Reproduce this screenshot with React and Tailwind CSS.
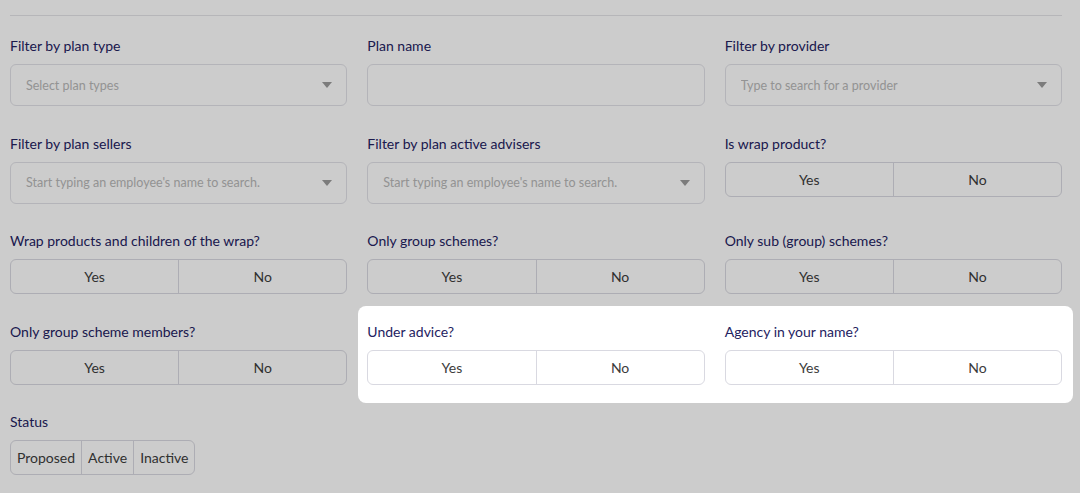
import React from "react";

const labelCls = "block text-[14px] leading-[20px] text-[#24225f] mb-2";

function Caret() {
  return (
    <svg width="10" height="6" viewBox="0 0 10 6" className="shrink-0">
      <path d="M0 0 L10 0 L5 6 Z" fill="#9c9c9c" />
    </svg>
  );
}

function SelectField({ label, placeholder, caret = true }) {
  return (
    <div className="flex flex-col">
      <span className={labelCls}>{label}</span>
      <div className="h-[42px] rounded-md border border-[#e2e2e8] bg-white flex items-center pl-[15px] pr-[14px]">
        <span className="flex-1 text-[12.5px] leading-[18px] pt-px text-[#b8b8b8] truncate">{placeholder}</span>
        {caret && <Caret />}
      </div>
    </div>
  );
}

function YesNo({ label }) {
  return (
    <div className="flex flex-col">
      <span className={labelCls}>{label}</span>
      <div className="h-[35px] rounded-md border border-[#d9d9e1] bg-white flex text-[14px] text-[#3c3c3c]">
        <button className="flex-1 flex items-center justify-center border-r border-[#d9d9e1]">Yes</button>
        <button className="flex-1 flex items-center justify-center">No</button>
      </div>
    </div>
  );
}

export default function App() {
  return (
    <div
      className="relative w-[1080px] h-[493px] overflow-hidden bg-white"
      style={{ fontFamily: "Lato, 'Noto Sans', sans-serif" }}
    >
      <div className="pl-[10px] w-[1062px] pt-[15px]">
        <div className="h-px bg-[#e4e4e8]" />
        <div className="mt-5 grid grid-cols-3 gap-x-5 gap-y-[27.5px]">
          <SelectField label="Filter by plan type" placeholder="Select plan types" />
          <SelectField label="Plan name" placeholder="" caret={false} />
          <SelectField label="Filter by provider" placeholder="Type to search for a provider" />

          <SelectField label="Filter by plan sellers" placeholder="Start typing an employee's name to search." />
          <SelectField label="Filter by plan active advisers" placeholder="Start typing an employee's name to search." />
          <YesNo label="Is wrap product?" />

          <YesNo label="Wrap products and children of the wrap?" />
          <YesNo label="Only group schemes?" />
          <YesNo label="Only sub (group) schemes?" />

          <YesNo label="Only group scheme members?" />
          <div className="col-span-2 relative grid grid-cols-2 gap-x-5">
            <YesNo label="Under advice?" />
            <YesNo label="Agency in your name?" />
            {/* tour spotlight: transparent window with dimmed surroundings */}
            <div className="pointer-events-none absolute left-[-9px] right-[-11px] top-[-15.5px] bottom-[-18.5px] rounded-lg z-10 shadow-[0_0_0_9999px_rgba(0,0,0,0.2)]" />
          </div>

          <div className="flex flex-col">
            <span className={labelCls}>Status</span>
            <div className="h-[35px] self-start rounded-md border border-[#d9d9e1] bg-white flex text-[14px] text-[#3c3c3c]">
              <button className="px-[6px] flex items-center border-r border-[#d9d9e1]">Proposed</button>
              <button className="px-[6px] flex items-center border-r border-[#d9d9e1]">Active</button>
              <button className="px-[6px] flex items-center">Inactive</button>
            </div>
          </div>
        </div>
      </div>
    </div>
  );
}
